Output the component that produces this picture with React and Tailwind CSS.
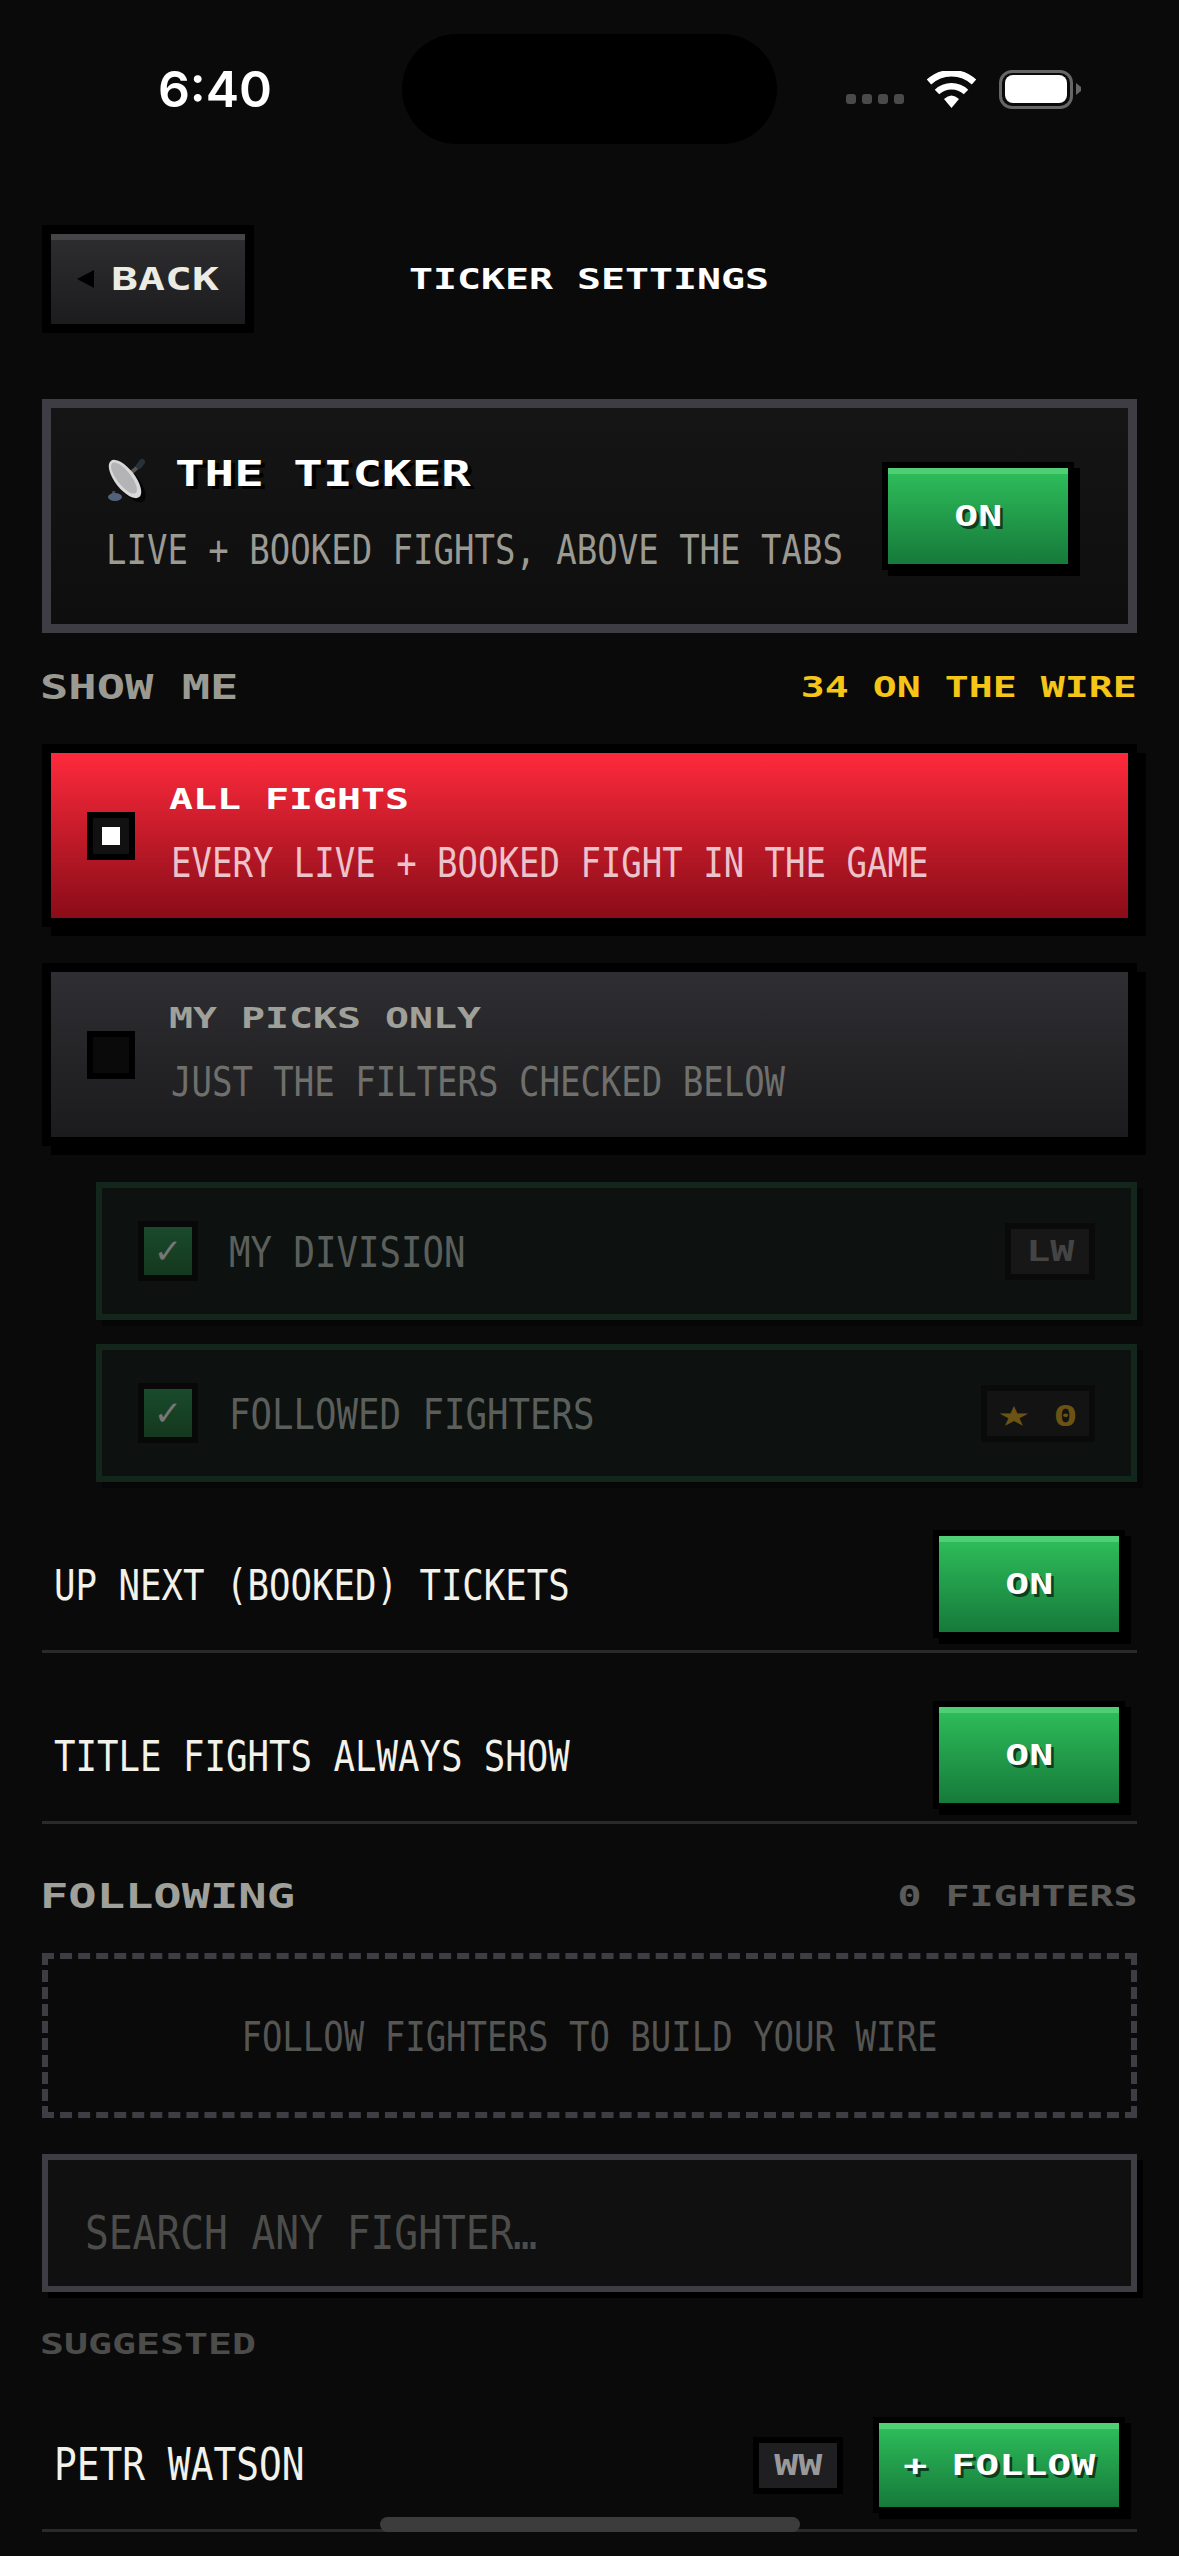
import React from 'react';

const PIXEL = "whitespace-nowrap leading-none font-bold [font-family:'DejaVu_Sans_Mono',monospace] scale-x-[1.384]";
const TERM = "whitespace-nowrap leading-none [font-family:'DejaVu_Sans_Mono',monospace] scale-x-[0.85]";
const GREEN_BTN = "flex items-center justify-center border-[6px] border-black bg-linear-to-b from-[#2fc05c] to-[#167a3a] shadow-[6px_6px_0_#000,inset_0_6px_0_#4fce75]";

function StatusBar() {
  return (
    <div className="grid h-[144px] grid-cols-[402px_375px_402px] items-end">
      <div className="flex h-[110px] items-center justify-center pl-[28px]">
        <span className="whitespace-nowrap text-[50px] leading-none font-semibold text-white [font-family:Inter,sans-serif]">6:40</span>
      </div>
      <div className="h-[110px] rounded-full bg-black" />
      <div className="flex h-[110px] items-center pl-[69px]">
        <div className="mt-[20px] flex gap-[6px]">
          <span className="h-[10px] w-[10px] rounded-[3px] bg-[#4a4a4a]" />
          <span className="h-[10px] w-[10px] rounded-[3px] bg-[#4a4a4a]" />
          <span className="h-[10px] w-[10px] rounded-[3px] bg-[#4a4a4a]" />
          <span className="h-[10px] w-[10px] rounded-[3px] bg-[#4a4a4a]" />
        </div>
        <svg className="ml-[22px]" width="51" height="37" viewBox="0 0 51 37" fill="none">
          <path d="M3 11A33 33 0 0 1 48 11" stroke="#fff" strokeWidth="6.5" />
          <path d="M11 21A21 21 0 0 1 40 21" stroke="#fff" strokeWidth="6.5" />
          <path d="M18 28Q25.5 21 33 28L25.5 37Z" fill="#fff" />
        </svg>
        <div className="ml-[22px] flex items-center">
          <div className="flex h-[39px] w-[74px] items-center justify-center rounded-[13px] border-[3px] border-[#666]">
            <div className="h-[28px] w-[62px] rounded-[8px] bg-white" />
          </div>
          <svg className="ml-[3px]" width="5" height="12" viewBox="0 0 5 12"><path d="M0 0L5 4V8L0 12Z" fill="#666" /></svg>
        </div>
      </div>
    </div>
  );
}

function Header() {
  return (
    <div className="mt-[81px] grid grid-cols-[1fr_auto_1fr] items-center px-[42px]">
      <button className="flex h-[108px] w-[212px] items-center border-[9px] border-black bg-linear-to-b from-[#2e2e31] to-[#1c1c1e] pl-[26px] shadow-[inset_0_6px_0_#454548]">
        <svg width="17" height="18" viewBox="0 0 17 18"><path d="M17 0V18L0 9Z" fill="#000" /></svg>
        <span className={`${PIXEL} origin-left ml-[17px] text-[32.4px] text-[#ecece4]`}>BACK</span>
      </button>
      <span className={`${PIXEL} origin-center text-[28.8px] text-white`}>TICKER SETTINGS</span>
      <span />
    </div>
  );
}

function Dish() {
  return (
    <svg className="mt-[2px] shrink-0" width="46" height="44" viewBox="0 0 46 44">
      <ellipse cx="24" cy="25" rx="10" ry="22" transform="rotate(-38 24 25)" fill="#000" opacity="0.75" />
      <path d="M8 32L6 40M14 36L10 40" stroke="#4a4a50" strokeWidth="3" />
      <ellipse cx="9" cy="38" rx="7" ry="4" fill="#51637a" />
      <path d="M20 18L33 7" stroke="#555" strokeWidth="4" />
      <path d="M33 7L36 3" stroke="#27313a" strokeWidth="6" strokeLinecap="round" />
      <ellipse cx="19" cy="20" rx="10" ry="23" transform="rotate(-38 19 20)" fill="#d8d8d8" />
      <ellipse cx="18" cy="19" rx="7" ry="19" transform="rotate(-38 18 19)" fill="#b4b4b6" />
    </svg>
  );
}

function TickerPanel() {
  return (
    <div className="mx-[42px] mt-[66px] flex h-[234px] items-center justify-between border-[9px] border-[#3e3d43] bg-linear-to-b from-[#151515] to-[#0e0e0e] pr-[54px] pl-[55px]">
      <div className="mb-[8px] flex min-w-0 flex-1 flex-col items-start">
        <div className="flex h-[52px] items-center">
          <Dish />
          <span className={`${PIXEL} origin-left mb-[12px] ml-[23px] text-[35.5px] text-white [text-shadow:3px_3px_0_#000]`}>THE TICKER</span>
        </div>
        <div className={`${TERM} origin-left mt-[24px] text-[40px] text-[#9a9a92]`}>LIVE + BOOKED FIGHTS, ABOVE THE TABS</div>
      </div>
      <Toggle />
    </div>
  );
}

function Toggle() {
  return (
    <div className={`${GREEN_BTN} h-[108px] w-[192px] shrink-0`}>
      <span className={`${PIXEL} origin-center text-[28.8px] text-white [text-shadow:2px_3px_0_#0d3d20]`}>ON</span>
    </div>
  );
}

function ChoiceCard({ active, title, sub }) {
  return (
    <div className={`flex h-[183px] items-center border-[9px] border-black pl-[36px] shadow-[9px_9px_0_#000] ${active ? 'bg-linear-to-b from-[#ff2a3c] to-[#8a0c18]' : 'bg-linear-to-b from-[#2f2f33] to-[#1b1b1d]'}`}>
      <div className={`flex h-[48px] w-[48px] shrink-0 items-center justify-center border-[6px] border-black ${active ? 'bg-[#111]' : 'bg-[#0a0a0a]'}`}>
        {active && <div className="h-[18px] w-[18px] bg-white" />}
      </div>
      <div className="mb-[3px] ml-[36px] flex min-w-0 flex-1 flex-col items-start">
        <div className={`${PIXEL} origin-left -ml-[2px] text-[28.8px] ${active ? 'text-white' : 'text-[#a0a09a]'}`}>{title}</div>
        <div className={`${TERM} origin-left mt-[29px] text-[40px] ${active ? 'text-[#ecc3ca]' : 'text-[#6f6f6c]'}`}>{sub}</div>
      </div>
    </div>
  );
}

function FilterRow({ label, badge, gold }) {
  return (
    <div className="flex h-[138px] items-center justify-between border-[6px] border-[#13261b] bg-[#0d1210] pr-[36px] pl-[36px] shadow-[6px_6px_0_#060606]">
      <div className="flex items-center">
        <div className="flex h-[60px] w-[60px] items-center justify-center border-[6px] border-[#080808] bg-linear-to-b from-[#194a2b] to-[#14381f]">
          <span className="text-[34px] leading-none text-[#777] [font-family:'DejaVu_Sans',sans-serif]">✓</span>
        </div>
        <span className={`${TERM} origin-left mt-[3px] ml-[31px] text-[42px] text-[#5b5f5c]`}>{label}</span>
      </div>
      <div className={`flex h-[57px] items-center justify-center border-[6px] border-[#0a0a0a] ${gold ? 'w-[114px] bg-[#131313]' : 'w-[90px] bg-[#171717]'}`}>
        <span className={`${PIXEL} origin-center text-[28.8px] ${gold ? 'text-[#6b5314]' : 'text-[#444]'}`}>{badge}</span>
      </div>
    </div>
  );
}

function SettingRow({ label }) {
  return (
    <div className="mx-[42px] flex h-[171px] items-end justify-between border-b-[3px] border-[#2a2a2a] pr-[12px] pb-[12px] pl-[12px]">
      <span className={`${TERM} origin-left mb-[31px] text-[42px] text-[#f2f2ea]`}>{label}</span>
      <Toggle />
    </div>
  );
}

export default function App() {
  return (
    <div className="relative h-[2556px] w-full overflow-hidden bg-[#0a0a0a]">
      <StatusBar />
      <Header />
      <TickerPanel />

      <div className="mx-[42px] mt-[42px] flex h-[24px] items-center justify-between">
        <span className={`${PIXEL} origin-left -ml-[2px] text-[34px] text-[#9a9a92]`}>SHOW ME</span>
        <span className={`${PIXEL} origin-right text-[28.8px] text-[#f5c518]`}>34 ON THE WIRE</span>
      </div>

      <div className="mx-[42px] mt-[45px] flex flex-col gap-[36px]">
        <ChoiceCard active title="ALL FIGHTS" sub="EVERY LIVE + BOOKED FIGHT IN THE GAME" />
        <ChoiceCard title="MY PICKS ONLY" sub="JUST THE FILTERS CHECKED BELOW" />
      </div>

      <div className="mt-[36px] mr-[42px] ml-[96px] flex flex-col gap-[24px]">
        <FilterRow label="MY DIVISION" badge="LW" />
        <FilterRow label="FOLLOWED FIGHTERS" badge={<><span className="text-[38px]">★</span> 0</>} gold />
      </div>

      <SettingRow label="UP NEXT (BOOKED) TICKETS" />
      <SettingRow label="TITLE FIGHTS ALWAYS SHOW" />

      <div className="mx-[42px] mt-[60px] flex h-[24px] items-center justify-between">
        <span className={`${PIXEL} origin-left -ml-[2px] text-[34px] text-[#a0a09a]`}>FOLLOWING</span>
        <span className={`${PIXEL} origin-right text-[28.8px] text-[#5a5a58]`}>0 FIGHTERS</span>
      </div>

      <div className="mx-[42px] mt-[45px] flex h-[165px] items-center justify-center border-[6px] border-dashed border-[#3e3d43]">
        <span className={`${TERM} origin-center mt-[2px] text-[40px] text-[#555553]`}>FOLLOW FIGHTERS TO BUILD YOUR WIRE</span>
      </div>

      <div className="mx-[42px] mt-[36px] flex h-[138px] items-center border-[6px] border-[#3e3d43] bg-[#101010] pl-[37px] shadow-[6px_6px_0_#000]">
        <span className={`${TERM} origin-left mt-[20px] text-[46.5px] text-[#4c4c4a]`}>SEARCH ANY FIGHTER…</span>
      </div>

      <div className="mx-[42px] mt-[42px] flex h-[21px] items-center">
        <span className={`${PIXEL} origin-left -ml-[2px] text-[28.8px] text-[#4c4c4a]`}>SUGGESTED</span>
      </div>

      <div className="mx-[42px] mt-[62px] flex items-center justify-between border-b-[3px] border-[#2a2a2a] pr-[12px] pb-[16px] pl-[12px]">
        <span className={`${TERM} origin-left text-[44.5px] text-[#f2f2ea]`}>PETR WATSON</span>
        <div className="flex items-center gap-[30px]">
          <div className="flex h-[57px] w-[90px] items-center justify-center border-[6px] border-black bg-[#1f1f22]">
            <span className={`${PIXEL} origin-center text-[28.8px] text-[#999]`}>WW</span>
          </div>
          <div className={`${GREEN_BTN} h-[96px] w-[252px]`}>
            <span className={`${PIXEL} origin-center text-[28.8px] text-white [text-shadow:2px_3px_0_#0d3d20]`}>+ FOLLOW</span>
          </div>
        </div>
      </div>

      <div className="absolute top-[2517px] left-[380px] h-[15px] w-[420px] rounded-full bg-[#3c3c3c]" />
    </div>
  );
}
